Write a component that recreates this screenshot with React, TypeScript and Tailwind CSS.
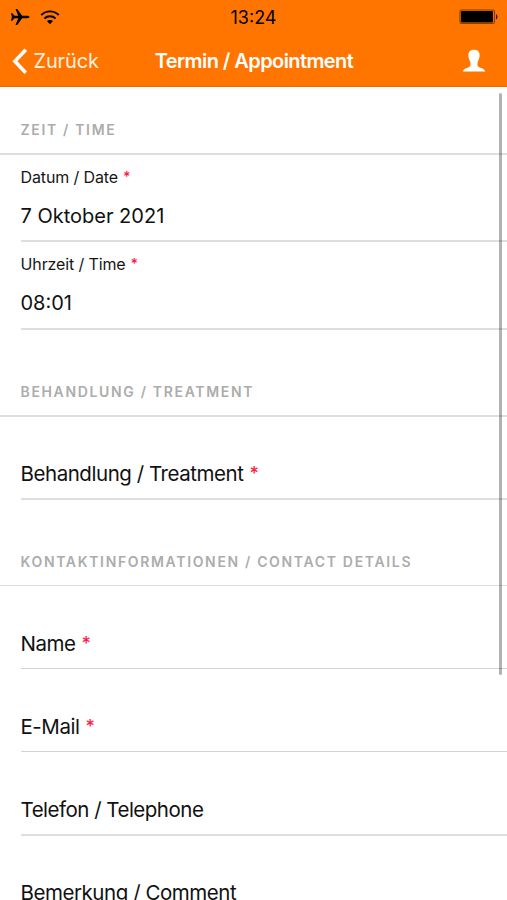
type RowProps = { label: string; required?: boolean; size: string; line?: string; spacing?: string };

function Star({ className }: { className: string }) {
  return <span className={`text-[#fb1c45] ${className}`}>*</span>;
}

function SectionTitle({ title, size }: { title: string; size: string }) {
  return (
    <div className={`flex items-end border-[#dedede] pl-[20.5px] ${size}`}>
      <h2 className="whitespace-nowrap text-[14px] font-semibold leading-4 tracking-[1.66px] text-[#acacac]">{title}</h2>
    </div>
  );
}

function ValueField({ label, value, size }: { label: string; value: string; size: string }) {
  return (
    <div className={`ml-[21px] flex flex-col border-b-2 border-[#dedede] ${size}`}>
      <div className="-ml-[0.5px] flex text-[16px] leading-5 tracking-[-0.12px] text-[#161616]">
        <span>{label}</span>
        <Star className="ml-[5px] text-[14px] font-semibold leading-5" />
      </div>
      <div className="-ml-[0.5px] mt-[17px] text-[20px] leading-6 tracking-[0px]">{value}</div>
    </div>
  );
}

function Field({ label, required, size, line = "border-b border-[#d2d2d2]", spacing = "tracking-[-0.45px]" }: RowProps) {
  return (
    <div className={`ml-[21px] flex shrink-0 items-end pb-[12px] text-[20.5px] leading-6 ${line} ${size}`}>
      <span className={`-ml-[0.5px] whitespace-nowrap ${spacing}`}>{label}</span>
      {required && <Star className="ml-[6px] text-[18px] font-medium" />}
    </div>
  );
}

function StatusBar() {
  return (
    <div className="grid h-[34px] grid-cols-3 items-center text-black">
      <div className="flex items-center gap-[10px] pl-[10px]">
        <svg width="20" height="18" viewBox="0 0 21 18" fill="currentColor">
          <path d="M1 5h1.5l2.2 2.8h4L5.8 .5h1.8l5.2 7.3h5.1c1.8 0 2.5.7 2.5 1.2s-.7 1.2-2.5 1.2h-5.1l-5.2 7.3H5.8l2.9-7.3h-4L2.5 13H1l1-4z" />
        </svg>
        <svg width="20" height="15" viewBox="0 0 20 15" fill="none" stroke="currentColor" strokeWidth="1.8">
          <path d="M1.200 5C6.300.2 13.700.2 18.800 5M4.400 8.500c3.200-3 8-3 11.200 0" />
          <path d="M6.900 11.100c1.8-1.6 4.4-1.6 6.200 0L10 14.300z" fill="currentColor" stroke="none" />
        </svg>
      </div>
      <div className="pt-px text-center text-[18px] leading-6 tracking-[0px]">13:24</div>
      <div className="flex justify-end pr-[8px]">
        <svg width="40" height="16" viewBox="0 0 40 16">
          <rect x="1" y="1" width="34.5" height="13.5" rx="1.5" fill="none" stroke="#8a3e00" strokeWidth="1.2" />
          <rect x="2" y="2" width="32" height="11.5" rx="1" fill="#000" />
          <path d="M37 5.2c2 .6 2 4.600 0 5.200z" fill="#3b1a00" />
        </svg>
      </div>
    </div>
  );
}

export default function App() {
  return (
    <div className="relative flex h-[900px] w-[507px] flex-col overflow-hidden bg-white font-['Inter','Liberation_Sans',sans-serif] text-[#111]">
      <header className="h-[87px] shrink-0 border-b border-[#e96a05] bg-[#ff7500]">
        <StatusBar />
        <nav className="grid h-[52px] grid-cols-[150px_1fr_150px] items-center pt-[2px] text-white">
          <div className="flex items-center gap-[6px] pl-[12px]">
            <svg width="16" height="27" viewBox="0 0 16 27" fill="none" stroke="currentColor" strokeWidth="3.6">
              <path d="M13.800 1.800 2.900 13.300l10.900 11.500" />
            </svg>
            <span className="-ml-[0.5px] text-[20px] leading-6 tracking-[-0.15px] text-[#fff1e0]">Zurück</span>
          </div>
          <h1 className="whitespace-nowrap pl-px text-center text-[20px] font-semibold leading-6 tracking-[-0.58px]">Termin / Appointment</h1>
          <div className="flex justify-end pr-[21px]">
            <svg width="24" height="24" viewBox="0 0 24 24" fill="currentColor">
              <path d="M12 .8c3.700 0 5.700 2.100 5.600 5.400 0 2.300-.7 4.100-1.500 5.800-.9 2.300-.9 4.600.3 5.800 1.500 1.300 5.700 1.300 6.800 4.700H.8c1.100-3.400 5.300-3.400 6.800-4.700 1.200-1.200 1.200-3.500.3-5.800-.8-1.700-1.500-3.500-1.500-5.800C6.300 2.900 8.300.8 12 .8z" />
            </svg>
          </div>
        </nav>
      </header>

      <main className="flex flex-col">
        <SectionTitle title="ZEIT / TIME" size="h-[68px] border-b-2 pb-[15px]" />
        <ValueField label="Datum / Date" value="7 Oktober 2021" size="h-[87px] pt-[12px]" />
        <ValueField label="Uhrzeit / Time" value="08:01" size="h-[88px] pt-[12px]" />
        <SectionTitle title="BEHANDLUNG / TREATMENT" size="h-[87px] border-b-2 pb-[15px]" />
        <Field label="Behandlung / Treatment" required size="h-[83px]" line="border-b-2 border-[#dedede]" />
        <SectionTitle title="KONTAKTINFORMATIONEN / CONTACT DETAILS" size="h-[86px] border-b pb-[15px]" />
        <Field label="Name" required size="h-[83px]" />
        <Field label="E-Mail" required size="h-[83px]" />
        <Field label="Telefon / Telephone" size="h-[84px]" line="border-b-2 border-[#dedede]" spacing="tracking-[-0.5px]" />
        <Field label="Bemerkung / Comment" size="h-[82px]" />
      </main>

      <div className="absolute left-[499px] top-[93px] h-[582px] w-[3px] rounded-sm bg-black/30" />
    </div>
  );
}
